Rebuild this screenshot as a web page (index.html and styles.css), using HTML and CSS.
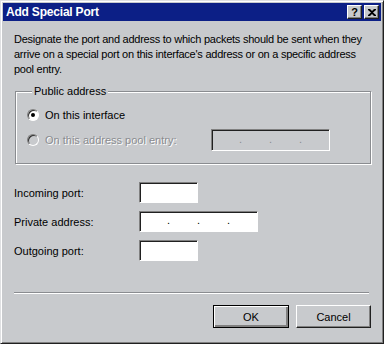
FILE: index.html
```html
<!DOCTYPE html>
<html lang="en">

<head>
  <meta charset="UTF-8" />
  <title>Add Special Port</title>
  <link rel="stylesheet" href="styles.css">
</head>

<body>
  <div class="window">
    <div class="titlebar">
      <span class="title">Add Special Port</span>
      <div class="title-buttons">
        <span class="tbtn help">?</span>
        <span class="tbtn close">
          <svg width="8" height="7" viewBox="0 0 8 7">
            <path d="M0 0h2l2 2 2-2h2v1L5 3.5 8 6v1H6L4 5 2 7H0V6l3-2.5L0 1z" fill="#000" />
          </svg>
        </span>
      </div>
    </div>

    <div class="content">
      <p class="desc">Designate the port and address to which packets should be sent when they<br>arrive on a special port on this interface's address or on a specific address<br>pool entry.</p>

      <fieldset class="group">
        <legend>Public address</legend>
        <div class="radio-row">
          <span class="radio checked"></span>
          <span>On this interface</span>
        </div>
        <div class="radio-row">
          <span class="radio disabled"></span>
          <span class="disabled-text">On this address pool entry:</span>
          <div class="field ip ip-pool off"><span>.</span><span>.</span><span>.</span></div>
        </div>
      </fieldset>

      <div class="fields">
        <label>Incoming port:</label>
        <div class="field port"></div>
        <label>Private address:</label>
        <div class="field ip"><span>.</span><span>.</span><span>.</span></div>
        <label>Outgoing port:</label>
        <div class="field port"></div>
      </div>

      <div class="separator"></div>

      <div class="buttons">
        <button class="default">OK</button>
        <button>Cancel</button>
      </div>
    </div>
  </div>
</body>

</html>
```

FILE: styles.css
```css
* {
  box-sizing: border-box;
}

html,
body {
  margin: 0;
  padding: 0;
  background: #c8cacd;
  font-family: 'Liberation Sans', Arial, sans-serif;
  font-size: 11px;
  color: #000;
}

.window {
  width: 384px;
  height: 344px;
  background: #c8cacd;
  border: 1px solid;
  border-color: #dfe0e2 #202020 #202020 #dfe0e2;
  box-shadow: inset 1px 1px 0 #fff, inset -1px -1px 0 #808080;
  padding: 2px;
}

.titlebar {
  height: 18px;
  background: #0c1f86;
  display: flex;
  align-items: center;
  justify-content: space-between;
  padding: 0 2px 0 3px;
}

.title {
  color: #fff;
  font-weight: bold;
  font-size: 12px;
  letter-spacing: -0.2px;
}

.title-buttons {
  display: flex;
  gap: 2px;
}

.tbtn {
  width: 15px;
  height: 14px;
  background: #c8cacd;
  border: 1px solid;
  border-color: #fff #202020 #202020 #fff;
  box-shadow: inset -1px -1px 0 #808080;
  display: flex;
  align-items: center;
  justify-content: center;
  font-weight: bold;
  font-size: 11px;
  line-height: 1;
}

.content {
  padding: 11px 10px 0 11px;
}

.desc {
  margin: 0;
  line-height: 15px;
  white-space: nowrap;
  letter-spacing: -0.25px;
}

.group {
  margin: 7px 0 0 1px;
  padding: 6px 40px 0 11px;
  height: 80px;
  border: 1px solid #8a8c90;
  box-shadow: 1px 1px 0 #fff, inset 1px 1px 0 #fff;
}

.group legend {
  margin-left: 5px;
  padding: 0 2px;
  background: #c8cacd;
  line-height: 14px;
}

.radio-row {
  display: flex;
  align-items: center;
  gap: 6px;
  height: 22px;
  margin-bottom: 3px;
}

.radio {
  width: 12px;
  height: 12px;
  border-radius: 50%;
  background: #fff;
  border: 1px solid;
  border-color: #808080 #fff #fff #808080;
  box-shadow: inset 1px 1px 0 #303030;
  position: relative;
}

.radio.checked::after {
  content: "";
  position: absolute;
  left: 3px;
  top: 3px;
  width: 4px;
  height: 4px;
  border-radius: 50%;
  background: #000;
}

.radio.disabled {
  background: #c8cacd;
}

.disabled-text {
  color: #8a8c90;
  text-shadow: 1px 1px 0 #fff;
}

.field {
  height: 21px;
  background: #fff;
  border: 1px solid;
  border-color: #808080 #fff #fff #808080;
  box-shadow: inset 1px 1px 0 #202020;
}

.field.ip {
  width: 119px;
  display: flex;
  justify-content: space-evenly;
  align-items: center;
  padding-bottom: 3px;
  color: #000;
}

.field.ip-pool {
  margin-left: auto;
  height: 22px;
}

.field.off {
  background: #c8cacd;
  color: #8a8c90;
}

.field.port {
  width: 59px;
}

.fields {
  display: grid;
  grid-template-columns: 125px auto;
  align-items: center;
  justify-items: start;
  row-gap: 8px;
  margin-top: 18px;
}

.separator {
  margin-top: 31px;
  width: 355px;
  height: 2px;
  border-top: 1px solid #8a8c90;
  border-bottom: 1px solid #fff;
}

.buttons {
  display: flex;
  justify-content: flex-end;
  gap: 7px;
  margin-top: 11px;
}

button {
  width: 75px;
  height: 23px;
  background: #c8cacd;
  font-family: 'Liberation Sans', Arial, sans-serif;
  font-size: 11px;
  color: #000;
  border: 1px solid;
  border-color: #fff #202020 #202020 #fff;
  box-shadow: inset -1px -1px 0 #808080;
  padding: 0;
}

button.default {
  width: 76px;
  border: 1px solid #000;
  box-shadow: inset 1px 1px 0 #fff, inset -2px -2px 0 #808080;
}
```
